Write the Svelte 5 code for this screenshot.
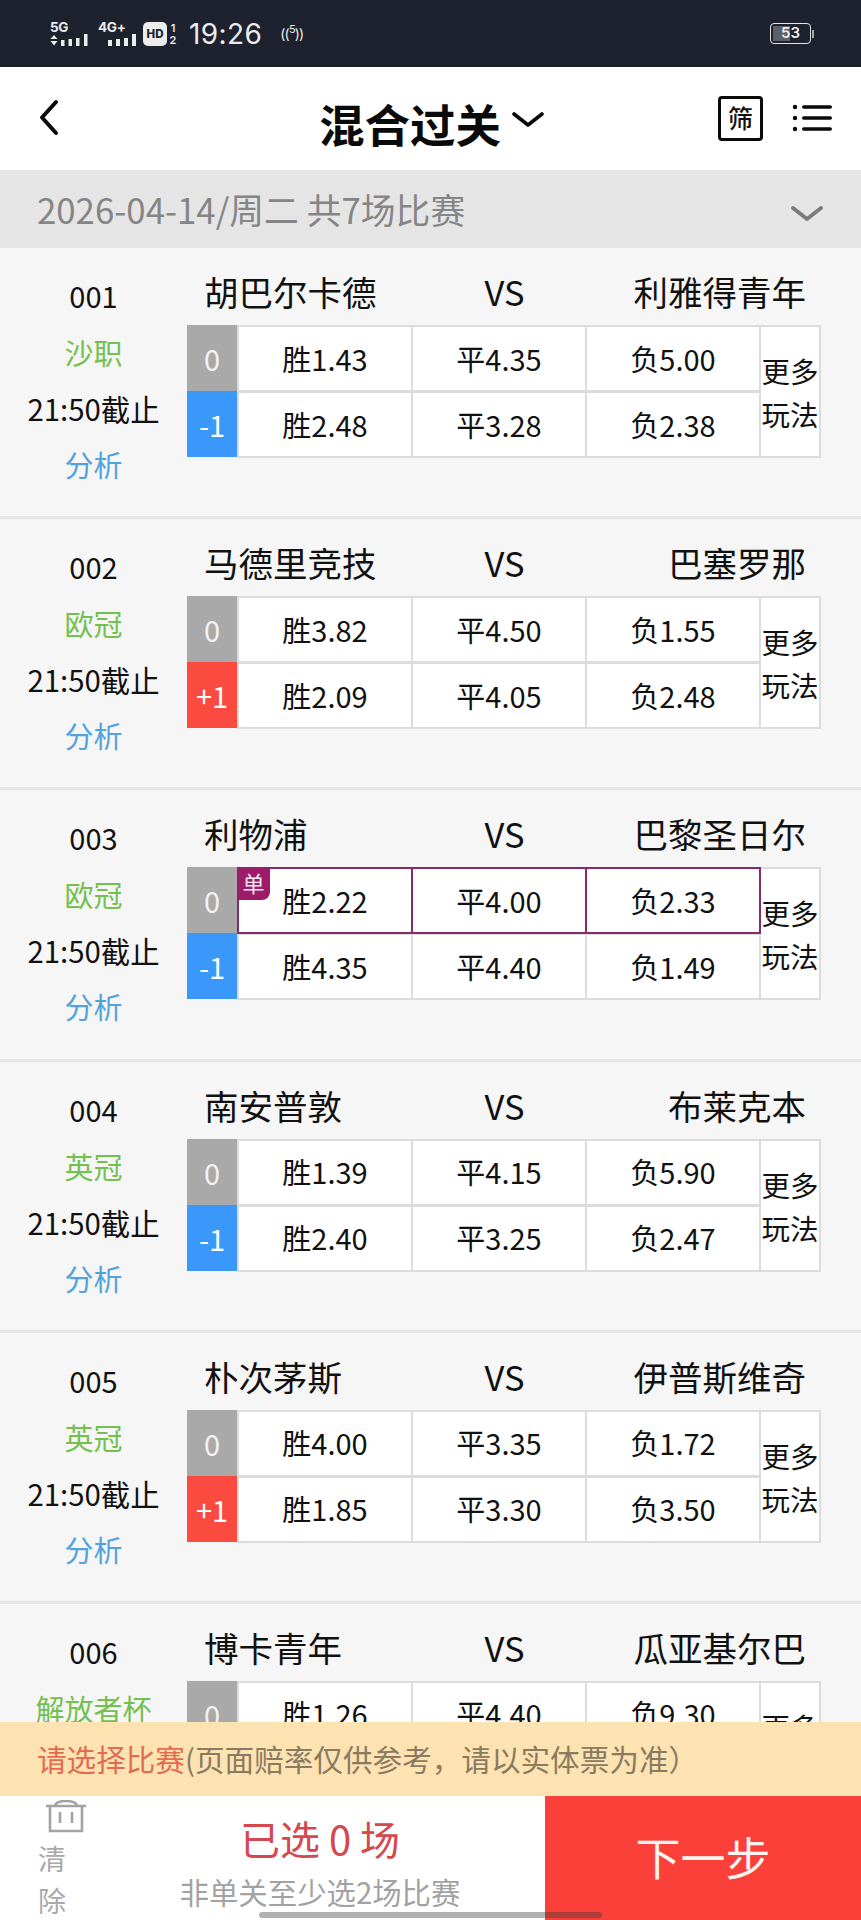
<script>
  const matches = [
    { no: '001', home: '胡巴尔卡德', away: '利雅得青年', league: '沙职', h: '-1', hc: 'blue', a: ['1.43', '4.35', '5.00'], b: ['2.48', '3.28', '2.38'] },
    { no: '002', home: '马德里竞技', away: '巴塞罗那', league: '欧冠', h: '+1', hc: 'red', a: ['3.82', '4.50', '1.55'], b: ['2.09', '4.05', '2.48'] },
    { no: '003', home: '利物浦', away: '巴黎圣日尔', league: '欧冠', h: '-1', hc: 'blue', single: true, a: ['2.22', '4.00', '2.33'], b: ['4.35', '4.40', '1.49'] },
    { no: '004', home: '南安普敦', away: '布莱克本', league: '英冠', h: '-1', hc: 'blue', a: ['1.39', '4.15', '5.90'], b: ['2.40', '3.25', '2.47'] },
    { no: '005', home: '朴次茅斯', away: '伊普斯维奇', league: '英冠', h: '+1', hc: 'red', a: ['4.00', '3.35', '1.72'], b: ['1.85', '3.30', '3.50'] },
    { no: '006', home: '博卡青年', away: '瓜亚基尔巴', league: '解放者杯', h: '-1', hc: 'blue', a: ['1.26', '4.40', '9.30'], b: ['2.40', '3.25', '2.47'] }
  ];
  const labels = ['胜', '平', '负'];
</script>

<div class="page">
  <div class="status">
    <div class="net">
      <span class="tag">5G</span>
      <svg class="arrows" width="8" height="11" viewBox="0 0 8 11"><path d="M4 0l3.5 4h-7zM.5 6h7L4 10.5z" fill="#ececec"/></svg>
      <svg class="bars" width="28" height="12" viewBox="0 0 28 12"><path d="M1 6h3.5v6H1zM8.500 5h3.500v7H8.500zM16 4h3.500v8H16zM24 0h3.500v12H24z" fill="#ececec"/></svg>
    </div>
    <div class="net second">
      <span class="tag">4G+</span>
      <svg class="bars" width="29" height="12" viewBox="0 0 29 12"><path d="M1 6h4v6H1zM9 5h4v7H9zM17 4h4v8h-4zM25 0h4v12h-4z" fill="#ececec"/></svg>
    </div>
    <span class="hd">HD</span>
    <span class="hdnum"><i>1</i><i>2</i></span>
    <span class="clock">19:26</span>
    <span class="hot">((<sup>5</sup>))</span>
    <span class="grow"></span>
    <span class="battery"><b></b><em>53</em></span>
    <span class="nub"></span>
  </div>

  <div class="header">
    <svg class="back" width="24" height="42" viewBox="0 0 24 42"><path d="M19 5 5 20.500 19 36" fill="none" stroke="#0a0a0a" stroke-width="4" stroke-linecap="round" stroke-linejoin="round"/></svg>
    <div class="title">
      <span>混合过关</span>
      <svg width="32" height="18" viewBox="0 0 32 18"><path d="M2 3l14 11L30 3" fill="none" stroke="#0a0a0a" stroke-width="3.6" stroke-linecap="round" stroke-linejoin="round"/></svg>
    </div>
    <div class="filter">筛</div>
    <svg class="menu" width="42" height="30" viewBox="0 0 42 30"><g fill="#0a0a0a"><circle cx="3" cy="4" r="2.2"/><circle cx="3" cy="15" r="2.2"/><circle cx="3" cy="26" r="2.2"/><rect x="10" y="2.200" width="30" height="3.600" rx="1.800"/><rect x="10" y="13.200" width="30" height="3.600" rx="1.800"/><rect x="10" y="24.200" width="30" height="3.600" rx="1.800"/></g></svg>
  </div>

  <div class="datebar">
    <span>2026-04-14/周二 共7场比赛</span>
    <svg width="32" height="18" viewBox="0 0 32 18"><path d="M2 3l14 11L30 3" fill="none" stroke="#7b7b7b" stroke-width="3.8" stroke-linecap="round" stroke-linejoin="round"/></svg>
  </div>

  <div class="list">
    {#each matches as m}
      <div class="row">
        <div class="info">
          <div class="no">{m.no}</div>
          <div class="league">{m.league}</div>
          <div class="time">21:50截止</div>
          <div class="analyse">分析</div>
        </div>
        <div class="main">
          <div class="teams">
            <span class="home">{m.home}</span>
            <span class="vs">VS</span>
            <span class="away">{m.away}</span>
          </div>
          <div class="grid">
            <div class="hc grey">0</div>
            {#each m.a as v, i}
              <div class="cell" class:sel={m.single}>
                {#if m.single && i === 0}<span class="badge">单</span>{/if}
                {labels[i]}{v}
              </div>
            {/each}
            <div class="more">更多<br />玩法</div>
            <div class="hc {m.hc}">{m.h}</div>
            {#each m.b as v, i}
              <div class="cell">{labels[i]}{v}</div>
            {/each}
          </div>
        </div>
      </div>
    {/each}
  </div>

  <div class="notice"><span class="warn">请选择比赛</span>(页面赔率仅供参考，请以实体票为准）</div>

  <div class="footer">
    <div class="clear">
      <svg width="46" height="34" viewBox="0 0 46 34"><g fill="none" stroke="#a3a3a3" stroke-width="2.600"><path d="M2 6h40M11 5.500c2-6 20-6 22 0M6 6v25h32V6M16 12v11M28 12v11"/></g></svg>
      <span>清</span>
      <span>除</span>
    </div>
    <div class="summary">
      <div class="count">已选 0 场</div>
      <div class="hint">非单关至少选2场比赛</div>
    </div>
    <div class="next">下一步</div>
  </div>
  <div class="home-bar"></div>
</div>

<style>
  :global(body) { margin: 0; }
  .page {
    position: relative;
    width: 861px;
    height: 1920px;
    display: flex;
    flex-direction: column;
    overflow: hidden;
    background: #f6f6f6;
    font-family: "Noto Sans CJK SC", "Noto Sans", sans-serif;
    color: #111;
  }
  .status {
    height: 67px;
    flex: none;
    box-sizing: border-box;
    padding: 0 47px 0 50px;
    background: #1e222e;
    color: #ececec;
    display: flex;
    align-items: center;
    font-family: "Inter", "Noto Sans", sans-serif;
  }
  .net { position: relative; width: 38px; height: 25px; }
  .net.second { margin-left: 10px; }
  .tag { position: absolute; left: 0; top: -1px; font-size: 13.5px; font-weight: 700; line-height: 14px; letter-spacing: -0.3px; }
  .arrows { position: absolute; left: 0; bottom: 0; }
  .bars { position: absolute; right: 0; bottom: 0; }
  .hd {
    margin-left: 7px;
    width: 24px;
    height: 24px;
    border-radius: 5px;
    background: #ececec;
    color: #1e222e;
    font-size: 11.5px;
    font-weight: 800;
    line-height: 24px;
    text-align: center;
  }
  .hdnum { width: 10px; margin-left: 1px; display: flex; flex-direction: column; font-size: 11px; font-weight: 600; line-height: 12px; text-align: center; }
  .hdnum i { font-style: normal; }
  .clock { margin-left: 11px; font-size: 28px; font-weight: 400; letter-spacing: 0.4px; }
  .hot { margin-left: 18px; font-size: 14px; white-space: nowrap; letter-spacing: -0.8px; }
  .hot sup { font-size: 11px; line-height: 0; }
  .grow { flex: 1; }
  .battery {
    position: relative;
    width: 41px;
    height: 21px;
    box-sizing: border-box;
    border: 1.5px solid #e4e4e4;
    border-radius: 4px;
    overflow: hidden;
    text-align: center;
  }
  .battery b { position: absolute; left: 2px; top: 2px; bottom: 2px; width: 17px; background: #5c6068; }
  .battery em { position: relative; font-style: normal; font-size: 15px; font-weight: 600; line-height: 18px; display: block; }
  .nub { width: 2px; height: 8px; margin-left: 1px; background: #aaa; }

  .header {
    position: relative;
    height: 103px;
    flex: none;
    background: #fff;
  }
  .back { position: absolute; left: 37px; top: 30px; }
  .title {
    position: absolute;
    left: 319px;
    top: 0;
    height: 103px;
    box-sizing: border-box;
    padding-top: 8px;
    display: flex;
    align-items: center;
    font-size: 45.5px;
    font-weight: 700;
    color: #0a0a0a;
  }
  .title svg { margin: -6px 0 0 11px; }
  .filter {
    position: absolute;
    left: 718px;
    top: 29px;
    width: 45px;
    height: 45px;
    box-sizing: border-box;
    border: 3px solid #0a0a0a;
    border-radius: 4px;
    font-size: 25px;
    font-weight: 500;
    line-height: 37px;
    text-align: center;
  }
  .menu { position: absolute; left: 792px; top: 36px; }

  .datebar {
    height: 78px;
    flex: none;
    box-sizing: border-box;
    padding: 0 38px 0 37px;
    background: #e5e5e5;
    color: #858585;
    font-size: 34.8px;
    display: flex;
    align-items: center;
    justify-content: space-between;
  }
  .datebar svg { margin-top: 10px; }

  .list { flex: 1; min-height: 0; overflow: hidden; }
  .row {
    height: 271.2px;
    box-sizing: border-box;
    border-bottom: 3px solid #e6e6e6;
    display: flex;
  }
  .info { width: 187px; flex: none; text-align: center; }
  .no { margin-top: 26px; font-size: 29px; line-height: 42px; }
  .league { margin-top: 15px; font-size: 29px; line-height: 42px; color: #74c04f; white-space: nowrap; }
  .time { margin-top: 14px; font-size: 29.400px; line-height: 42px; white-space: nowrap; }
  .analyse { margin-top: 14px; font-size: 29px; line-height: 42px; color: #54a2dc; }
  .main { flex: 1; }
  .teams {
    height: 77px;
    box-sizing: border-box;
    padding: 19px 55px 0 17px;
    display: grid;
    grid-template-columns: 1fr auto 1fr;
    font-size: 34.500px;
    line-height: 48px;
    white-space: nowrap;
  }
  .vs { margin-left: -1px; }
  .away { text-align: right; }
  .grid {
    width: 634px;
    display: grid;
    grid-template-columns: 50px 174px 174px 174px 62px;
    grid-template-rows: 66px 66px;
    font-size: 29px;
  }
  .hc {
    color: #fff;
    display: flex;
    align-items: center;
    justify-content: center;
    box-sizing: border-box;
  }
  .hc.grey { background: #a9a9a9; color: #f2f2f2; }
  .hc.blue { background: #3b98fb; }
  .hc.red { background: #fb4a3f; }
  .cell {
    position: relative;
    box-sizing: border-box;
    padding-bottom: 2px;
    background: #fff;
    border: 2px solid #dcdcdc;
    margin-right: -2px;
    margin-bottom: -1px;
    display: flex;
    align-items: center;
    justify-content: center;
    z-index: 0;
  }
  .cell.sel { border: 2.5px solid #862a6c; z-index: 1; }
  .badge {
    position: absolute;
    left: -2px;
    top: -2px;
    width: 33px;
    height: 33px;
    border-bottom-right-radius: 8px;
    background: #9c1c6a;
    color: #f7e6ef;
    font-size: 22px;
    line-height: 31px;
    text-align: center;
  }
  .more {
    grid-column: 5;
    grid-row: 1 / 3;
    box-sizing: border-box;
    height: 133px;
    padding-top: 22px;
    background: #fff;
    border: 2px solid #dcdcdc;
    font-size: 28.500px;
    line-height: 43px;
    text-align: center;
    overflow: hidden;
  }

  .notice {
    height: 74px;
    flex: none;
    box-sizing: border-box;
    padding-left: 37px;
    background: #fde2b2;
    color: #8a7a5f;
    font-size: 29.600px;
    line-height: 74px;
    white-space: nowrap;
  }
  .warn { color: #e26b50; }
  .footer {
    height: 124px;
    flex: none;
    display: flex;
    background: #fff;
  }
  .clear {
    width: 95px;
    flex: none;
    box-sizing: border-box;
    padding: 4px 0 0 38px;
    color: #a9a9a9;
    font-size: 28px;
    line-height: 42px;
    overflow: hidden;
  }
  .clear svg { display: block; margin: 0 0 3px 6px; }
  .clear span { display: block; width: 36px; }
  .summary { width: 450px; flex: none; text-align: center; }
  .count { margin-top: 16px; font-size: 40px; line-height: 52px; color: #d5484d; }
  .hint { margin-top: 8px; font-size: 29.400px; line-height: 38px; color: #a2a2a2; white-space: nowrap; }
  .next {
    flex: 1;
    background: #fb403a;
    color: #fdf3f0;
    font-size: 45px;
    display: flex;
    align-items: center;
    justify-content: center;
    padding-bottom: 4px;
    box-sizing: border-box;
  }
  .home-bar {
    position: absolute;
    left: 259px;
    top: 1912px;
    width: 343px;
    height: 6px;
    border-radius: 3px;
    background: rgba(60, 60, 60, 0.4);
  }
</style>
